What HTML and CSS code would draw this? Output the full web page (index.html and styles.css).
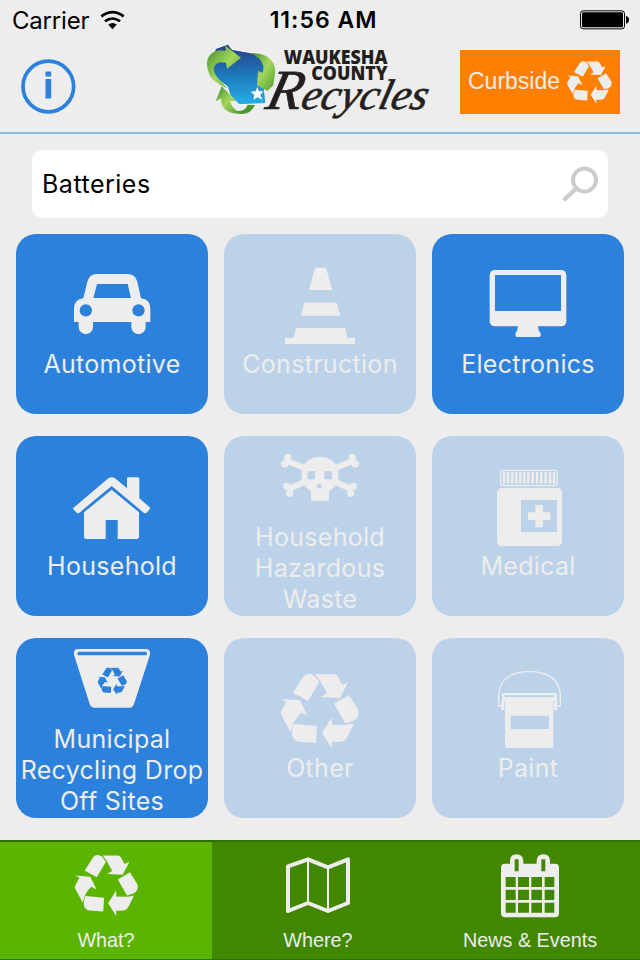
FILE: index.html
```html
<!DOCTYPE html>
<html lang="en">
<head>
    <meta charset="UTF-8">
    <meta name="viewport" content="width=device-width, initial-scale=1.0">
    <title>Waukesha County Recycles</title>
    <link rel="stylesheet" href="styles.css">
</head>
<body>
    <!-- shared recycling symbol -->
    <svg class="defs" width="0" height="0">
        <symbol id="recycle" viewBox="32 40 236 228" preserveAspectRatio="none">
            <path d="M69 98L100 50Q106 41 116 41Q127 41 133 47L148 66L114 123Z"/>
            <path d="M135 43H193Q200 44 204 51L217 74L235 66L210 114L152 111L171 100L150 61Z"/>
            <path d="M192 131L237 105L262 145Q270 158 262 172Q254 185 226 190Z"/>
            <path d="M252 190L232 231Q226 244 213 245L186 246V266L156 219L186 172V194L218 195Q238 195 252 190Z"/>
            <path d="M72 192L141 198L138 249L88 245Q74 244 68 232Q62 215 72 192Z"/>
            <path d="M33 117L90 121L113 168L94 158Q70 178 62 216L35 167Q31 160 35 152L50 125Z"/>
        </symbol>
    </svg>

    <div class="status-bar">
        <div class="carrier">
            <span>Carrier</span>
            <svg class="wifi" viewBox="300 30 76 60">
                <path d="M304 49Q338 23 372 49M315 64Q338 47 361 64" fill="none" stroke="#000" stroke-width="8"/>
                <path d="M325 74Q338 64 351 74L338 88Z"/>
            </svg>
        </div>
        <div class="time">11:56 AM</div>
        <svg class="battery" viewBox="420 32 150 60">
            <rect x="421.5" y="34.500" width="132" height="54" rx="8" fill="none" stroke="#000" stroke-width="3"/>
            <rect x="426" y="39" width="123" height="45" rx="4"/>
            <path d="M558 50Q567 52 567 61Q567 70 558 73Z"/>
        </svg>
    </div>

    <div class="header">
        <svg class="info" viewBox="63 176 164 164">
            <circle cx="144.500" cy="258" r="75.500" fill="none" stroke="#2b81db" stroke-width="11"/>
            <path d="M136 213H153V228H136ZM136 236H153V294H136Z" fill="#2b81db"/>
        </svg>
        <svg class="logo" viewBox="30 30 720 270">
            <defs>
                <linearGradient id="blue" x1="0" y1="0" x2="0" y2="1">
                    <stop offset="0" stop-color="#283a84"/>
                    <stop offset="0.5" stop-color="#1e78ba"/>
                    <stop offset="1" stop-color="#25aee8"/>
                </linearGradient>
                <linearGradient id="green" x1="0" y1="0" x2="1" y2="1">
                    <stop offset="0" stop-color="#3c8a2e"/>
                    <stop offset="0.5" stop-color="#a5d65c"/>
                    <stop offset="1" stop-color="#4f9d31"/>
                </linearGradient>
            </defs>
            <path d="M76 56L114 42L126 58L176 67L212 76L224 100L220 145L228 221L147 224L120 195L112 170L78 145L62 115Z" fill="url(#blue)" stroke="#fff" stroke-width="3"/>
            <path d="M62 142Q40 95 62 73Q80 55 107 63L105 46L153 83L111 116L108 98Q78 92 72 112Q66 130 96 157L113 176Q82 163 62 142Z" fill="url(#green)"/>
            <path d="M180 70Q222 66 244 91Q260 111 254 137L250 166L232 183L201 166L204 122L221 130Q226 86 180 70Z" fill="url(#green)"/>
            <path d="M95 169L139 214L120 212Q126 239 154 250Q121 255 102 235Q91 220 94 205L77 214Z" fill="url(#green)"/>
            <path d="M132 243Q165 247 173 224L195 225Q182 254 151 252Z" fill="#4d962f"/>
            <path d="M202 171L207 184L221 184L211 194L217 209L203 202L190 209L193 195L182 185L197 184Z" fill="#fff"/>
            <text class="logo-name" x="281" y="101" textLength="311" lengthAdjust="spacingAndGlyphs">WAUKESHA</text>
            <text class="logo-name" x="364" y="150" textLength="229" lengthAdjust="spacingAndGlyphs">COUNTY</text>
            <text class="logo-script" transform="translate(222 236) skewX(-14)" textLength="484" lengthAdjust="spacingAndGlyphs"><tspan class="logo-initial">R</tspan>ecycles</text>
        </svg>
        <div class="curbside">
            <span>Curbside</span>
            <svg><use href="#recycle"/></svg>
        </div>
    </div>

    <div class="search">
        <span>Batteries</span>
        <svg viewBox="366 498 111 108">
            <circle cx="433.500" cy="540" r="34.500" fill="none" stroke="#ccc" stroke-width="12"/>
            <path d="M408 566L375 597" stroke="#ccc" stroke-width="13" stroke-linecap="round"/>
        </svg>
    </div>

    <div class="categories">
        <div class="tile">
            <svg viewBox="36 21 240 234">
                <path fill-rule="evenodd" d="M70 115L82 65Q88 42 110 42H202Q226 42 232 65L243 115Q271 118 271 145V186H257V201A21.500 21.500 0 0 1 214 201V186H99V201A21.500 21.500 0 0 1 56 201V186H42V145Q42 118 70 115ZM111 72L100 114H213L203 72ZM59 151a18 18 0 1 0 37 0a18 18 0 1 0-37 0ZM217 151a18 18 0 1 0 37 0a18 18 0 1 0-37 0Z"/>
            </svg>
            <span>Automotive</span>
        </div>
        <div class="tile disabled">
            <svg viewBox="30 21 240 234">
                <path d="M135 23H168L187 90H117ZM103 128H200L211 167H93ZM80 204H222Q225 204 226 208L233 234H255V252H45V234H71L77 208Q78 204 80 204Z"/>
            </svg>
            <span>Construction</span>
        </div>
        <div class="tile">
            <svg viewBox="654 21 240 234">
                <path fill-rule="evenodd" d="M676 30H873Q889 30 889 47V182Q889 199 873 199H804Q804 211 811 218Q815 230 808 231H741Q734 230 737 218Q744 211 744 199H676Q659 199 659 182V47Q659 30 676 30ZM675 45V153H873V45Z"/>
            </svg>
            <span>Electronics</span>
        </div>

        <div class="tile">
            <svg viewBox="36 87 240 234">
                <path d="M40 204L145 115Q155 108 165 115L201 145V116Q201 112 205 112H234Q238 112 238 116V175L269 202Q271 205 269 208L259 219Q255 221 251 218L155 138L58 218Q54 221 50 218L40 208Q38 206 40 204Z"/>
                <path d="M155 149L237 217V291Q237 297 231 297H173V240H137V297H78Q72 297 72 291V217Z"/>
            </svg>
            <span>Household</span>
        </div>
        <div class="tile disabled long">
            <svg viewBox="150 -6 240 234">
                <path d="M170 62L230 87M370 62L310 87M175 148L230 123M365 148L310 123" fill="none" stroke="#ededed" stroke-width="18"/>
                <circle cx="173" cy="52" r="11"/><circle cx="164" cy="72" r="11"/>
                <circle cx="367" cy="52" r="11"/><circle cx="376" cy="72" r="11"/>
                <circle cx="170" cy="139" r="11"/><circle cx="179" cy="160" r="11"/>
                <circle cx="370" cy="139" r="11"/><circle cx="362" cy="160" r="11"/>
                <path fill-rule="evenodd" d="M243 154Q214 137 214 104Q217 52 270 51Q323 52 326 104Q326 137 297 154V177Q297 182 292 182H248Q243 182 243 177ZM242 93Q231 94 232 107Q232 118 238 118H255V93ZM283 93V118H306V103Q306 93 297 93ZM262 137Q262 131 268 131Q275 131 276 144H262Z"/>
            </svg>
            <span>Household Hazardous Waste</span>
        </div>
        <div class="tile disabled">
            <svg viewBox="54 27 240 234">
                <rect x="92" y="31" width="170" height="46" rx="8" fill="none" stroke="#ededed" stroke-width="4"/>
                <path d="M102 36V71M114 36V71M127 36V71M139 36V71M151 36V71M163 36V71M175 36V71M188 36V71M201 36V71M214 36V71M227 36V71M240 36V71M252 36V71" stroke="#ededed" stroke-width="7.500"/>
                <path fill-rule="evenodd" d="M97 84H260Q276 84 276 100V242Q276 258 260 258H97Q81 258 81 242V100Q81 84 97 84ZM153 120V216H261V120Z"/>
                <path d="M196 135H219V157H241V180H219V202H196V180H174V157H196Z"/>
            </svg>
            <span>Medical</span>
        </div>

        <div class="tile long">
            <svg viewBox="186 30 240 234">
                <path fill-rule="evenodd" d="M202 57H410Q422 59 420 74L372 222Q369 232 360 233H252Q242 232 239 222L192 74Q190 59 202 57ZM207 65Q202 66 202 71Q202 76 207 76H406Q411 76 411 71Q411 66 406 65Z"/>
                <use class="bin-mark" href="#recycle" x="263" y="112" width="88" height="84"/>
            </svg>
            <span>Municipal Recycling Drop Off Sites</span>
        </div>
        <div class="tile disabled">
            <svg viewBox="30 33 240 234"><use href="#recycle" x="32" y="40" width="236" height="228"/></svg>
            <span>Other</span>
        </div>
        <div class="tile disabled">
            <svg viewBox="654 33 240 234">
                <path d="M694 138H686V105Q690 37 778 34Q867 37 871 105V138H862" fill="none" stroke="#ededed" stroke-width="4"/>
                <path fill-rule="evenodd" d="M700 99H856Q861 99 861 104V123H862V150H852V123H850V256Q850 264 842 264H713Q705 264 705 256V123H703V150H693V126H696V104Q696 99 700 99ZM703 106V111H852V106ZM722 167V207H837V167Z"/>
            </svg>
            <span>Paint</span>
        </div>
    </div>

    <div class="tab-bar">
        <div class="tab active">
            <svg viewBox="219 69 198 198"><use href="#recycle" x="224" y="74" width="191" height="186"/></svg>
            <span>What?</span>
        </div>
        <div class="tab">
            <svg viewBox="45 69 198 198">
                <path d="M54 109L114 88L174 112L234 88V219L174 243L114 219L54 243Z" fill="none" stroke="#ededed" stroke-width="12" stroke-linejoin="round"/>
                <path d="M114 88V219M174 112V243" stroke="#ededed" stroke-width="6"/>
            </svg>
            <span>Where?</span>
        </div>
        <div class="tab">
            <svg viewBox="681 69 198 198">
                <path fill-rule="evenodd" d="M705 101H720V92Q721 73 740 73Q758 73 760 92V101H800V92Q802 73 820 73Q839 73 840 92V101H855Q867 101 867 113V250Q867 262 855 262H705Q693 262 693 250V113Q693 101 705 101ZM734 88V124H746V88ZM814 88V124H826V88ZM707 141V171H737V141ZM744 141V171H777V141ZM784 141V171H816V141ZM824 141V171H853V141ZM707 179V210H737V179ZM744 179V210H777V179ZM784 179V210H816V179ZM824 179V210H853V179ZM707 218V248H737V218ZM744 218V248H777V218ZM784 218V248H816V218ZM824 218V248H853V218Z"/>
            </svg>
            <span>News &amp; Events</span>
        </div>
    </div>
</body>
</html>
```
FILE: styles.css
```css
* {
    box-sizing: border-box;
}
body {
    margin: 0;
    width: 640px;
    height: 960px;
    overflow: hidden;
    background-color: #ededed;
    font-family: Inter, "Liberation Sans", sans-serif;
}
svg {
    display: block;
    flex-shrink: 0;
}
.defs {
    position: absolute;
}
.status-bar {
    display: grid;
    grid-template-columns: 1fr auto 1fr;
    align-items: center;
    height: 40px;
    padding: 0 10px 0 12px;
    font-size: 24px;
}
.carrier {
    display: flex;
    align-items: center;
    gap: 11px;
    letter-spacing: -0.2px;
}
.wifi {
    width: 25px;
    height: 20px;
}
.time {
    padding-left: 5px;
    font-weight: 600;
    font-size: 23px;
    letter-spacing: 1px;
}
.battery {
    width: 50px;
    height: 20px;
    justify-self: end;
}
.header {
    display: grid;
    grid-template-columns: 200px 240px 200px;
    height: 94px;
    border-bottom: 2px solid #8bbbe5;
}
.info {
    width: 55px;
    height: 55px;
    margin: 19px 0 0 21px;
}
.logo {
    width: 240px;
    height: 90px;
    overflow: visible;
}
.logo-name {
    font-family: "Open Sans", sans-serif;
    font-weight: 800;
    font-size: 56px;
    fill: #231f20;
}
.logo-script {
    font-family: "Liberation Serif", serif;
    font-style: italic;
    font-size: 128px;
    fill: #231f20;
    stroke: #231f20;
    stroke-width: 2px;
}
.logo-initial {
    font-size: 170px;
}
.curbside {
    display: flex;
    align-items: center;
    width: 160px;
    height: 64px;
    margin: 10px 0 0 20px;
    padding: 0 8px;
    justify-content: space-between;
    background-color: #ff8000;
    color: #ededed;
    font-family: "Liberation Sans", Arial, sans-serif;
    font-size: 23px;
}
.curbside span {
    padding-bottom: 2px;
}
.curbside svg {
    width: 45px;
    height: 43px;
    fill: #ededed;
}
.search {
    display: flex;
    align-items: center;
    justify-content: space-between;
    height: 68px;
    margin: 16px 32px;
    padding: 0 9px 0 10px;
    border-radius: 10px;
    background-color: #fff;
    font-size: 25px;
    letter-spacing: 0.5px;
}
.search svg {
    width: 37px;
    height: 36px;
}
.categories {
    display: grid;
    grid-template-columns: repeat(3, 192px);
    grid-auto-rows: 180px;
    gap: 22px 16px;
    padding: 0 16px;
}
.tile {
    display: flex;
    flex-direction: column;
    align-items: center;
    justify-content: center;
    gap: 4px;
    padding-bottom: 1px;
    border-radius: 20px;
    background-color: #2b81db;
    color: #ededed;
    font-size: 25px;
    line-height: 31px;
    letter-spacing: 0.3px;
    text-align: center;
}
.tile svg {
    width: 80px;
    height: 78px;
    fill: #ededed;
}
.disabled {
    background-color: #bcd2e9;
}
.long {
    justify-content: flex-start;
    gap: 6px;
    padding-top: 2px;
}
.tile .bin-mark {
    fill: #2b81db;
}
.tab-bar {
    display: grid;
    grid-template-columns: repeat(3, 212px);
    height: 120px;
    margin-top: 22px;
    border-top: 2px solid #307000;
    border-bottom: 1px solid #307000;
    background-color: #418800;
}
.tab {
    display: flex;
    flex-direction: column;
    align-items: center;
    gap: 9px;
    padding-top: 11px;
    color: #ededed;
    font-family: "Liberation Sans", Arial, sans-serif;
    font-size: 19.8px;
    line-height: 24px;
}
.tab svg {
    width: 66px;
    height: 66px;
    fill: #ededed;
}
.active {
    background-color: #5bb500;
}
```
